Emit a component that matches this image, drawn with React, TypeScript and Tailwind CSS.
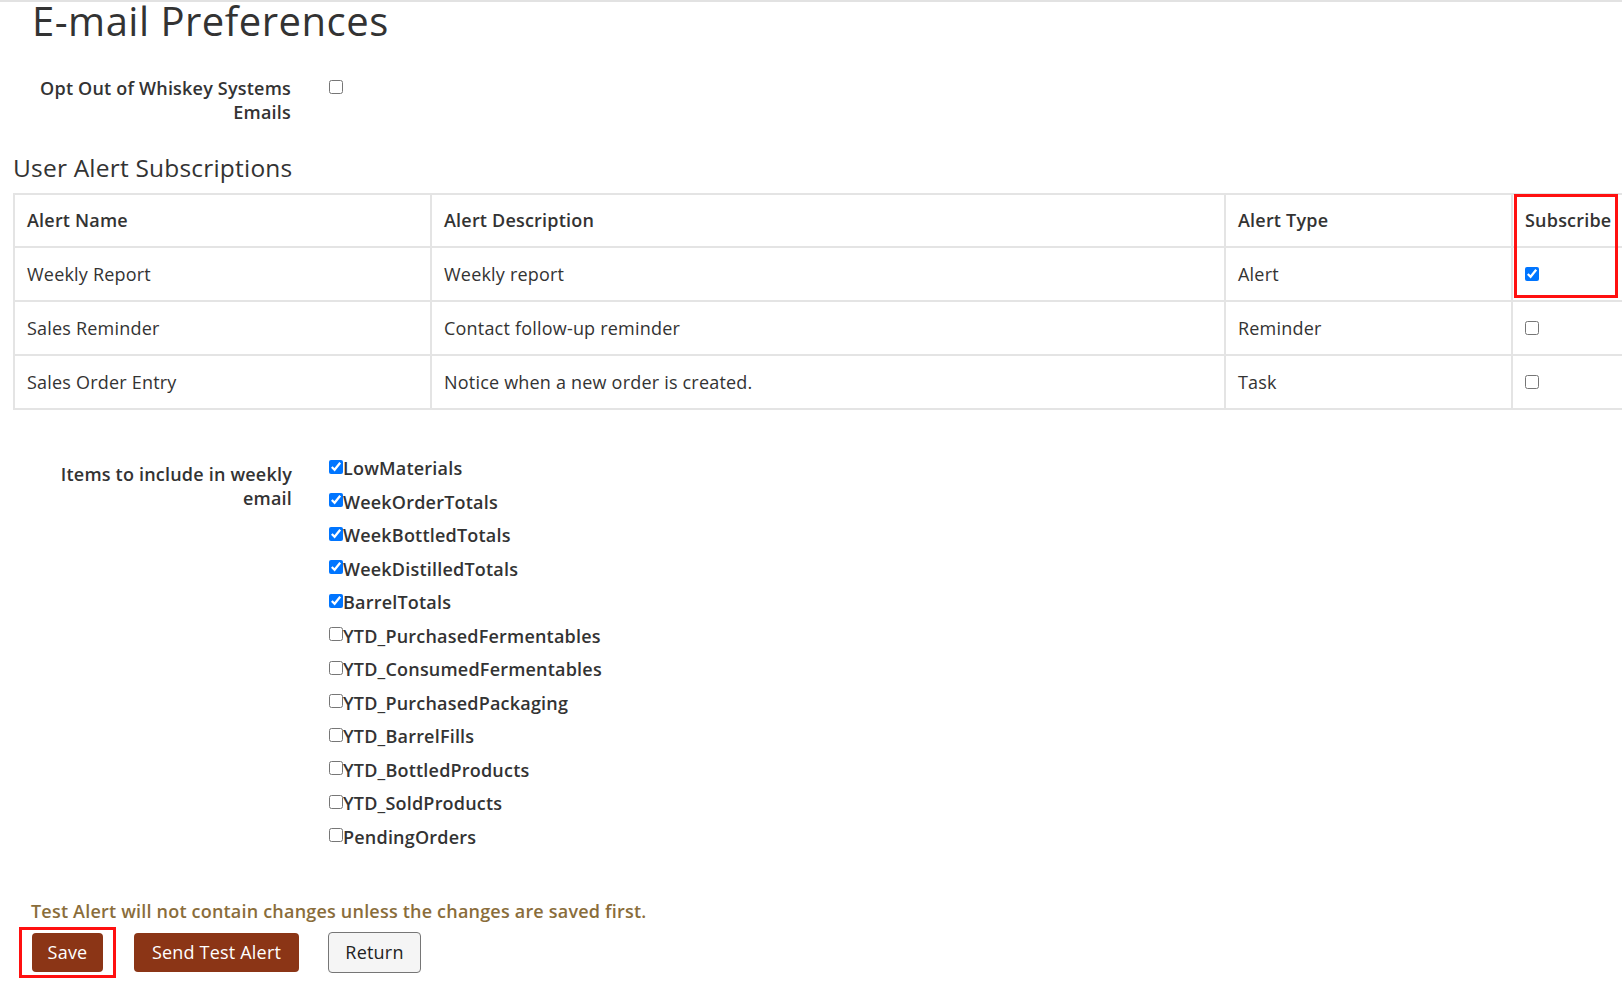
import React from "react"

const alerts = [
    { name: "Weekly Report", desc: "Weekly report", type: "Alert", on: true },
    { name: "Sales Reminder", desc: "Contact follow-up reminder", type: "Reminder", on: false },
    { name: "Sales Order Entry", desc: "Notice when a new order is created.", type: "Task", on: false },
]

const items = [
    { key: "LowMaterials", on: true },
    { key: "WeekOrderTotals", on: true },
    { key: "WeekBottledTotals", on: true },
    { key: "WeekDistilledTotals", on: true },
    { key: "BarrelTotals", on: true },
    { key: "YTD_PurchasedFermentables", on: false },
    { key: "YTD_ConsumedFermentables", on: false },
    { key: "YTD_PurchasedPackaging", on: false },
    { key: "YTD_BarrelFills", on: false },
    { key: "YTD_BottledProducts", on: false },
    { key: "YTD_SoldProducts", on: false },
    { key: "PendingOrders", on: false },
]

function Box({ checked }: { checked: boolean }) {
    return (
        <input
            type="checkbox"
            defaultChecked={checked}
            className="m-0 block h-[14px] w-[14px] accent-[#0075ff]"
        />
    )
}

export default function App() {
    return (
        <div className="min-h-screen w-full overflow-hidden border-t-2 border-[#e2e2e2] bg-white text-[#333] tracking-[0.2px] [font-family:'Open_Sans',sans-serif]">
            <h1 className="pl-[32px] text-[40px] leading-[38px] tracking-[0.5px] text-[#333]">E-mail Preferences</h1>

            <div className="mt-[36px] flex">
                <label className="w-[291px] pl-[21px] text-right text-[18px] leading-[24px] font-semibold">
                    Opt Out of Whiskey Systems Emails
                </label>
                <div className="ml-[38px] pt-[4px]">
                    <Box checked={false} />
                </div>
            </div>

            <h2 className="mt-[30px] pl-[13px] text-[24.5px] leading-[28px] text-[#333]">User Alert Subscriptions</h2>

            <div className="relative ml-[13px] mt-[11px]">
                <table className="w-[1640px] table-fixed border-collapse text-[18px]">
                    <colgroup>
                        <col className="w-[417px]" />
                        <col className="w-[794px]" />
                        <col className="w-[287px]" />
                        <col />
                    </colgroup>
                    <thead>
                        <tr className="h-[53px]">
                            {["Alert Name", "Alert Description", "Alert Type", "Subscribe"].map((h) => (
                                <th key={h} className="border-2 border-[#e4e4e4] px-[12px] text-left font-semibold">
                                    {h}
                                </th>
                            ))}
                        </tr>
                    </thead>
                    <tbody>
                        {alerts.map((a) => (
                            <tr key={a.name} className="h-[54px]">
                                <td className="border-2 border-[#e4e4e4] px-[12px]">{a.name}</td>
                                <td className="border-2 border-[#e4e4e4] px-[12px]">{a.desc}</td>
                                <td className="border-2 border-[#e4e4e4] px-[12px]">{a.type}</td>
                                <td className="border-2 border-[#e4e4e4] px-[12px]">
                                    <Box checked={a.on} />
                                </td>
                            </tr>
                        ))}
                    </tbody>
                </table>
                {/* highlight around the subscribe column */}
                <div className="pointer-events-none absolute left-[1501px] top-[1px] h-[104px] w-[104px] border-[3px] border-[#ff1010]" />
            </div>

            <div className="mt-[42px] flex">
                <label className="w-[292px] pl-[22px] pt-[10px] text-right text-[18px] leading-[24px] font-semibold">
                    Items to include in weekly email
                </label>
                <div className="ml-[37px] flex flex-col">
                    {items.map((it) => (
                        <label key={it.key} className="flex h-[33.5px] items-center text-[18px] font-semibold">
                            <span className="-mt-[4px] flex">
                                <Box checked={it.on} />
                            </span>
                            {it.key}
                        </label>
                    ))}
                </div>
            </div>

            <p className="mt-[44px] pl-[31px] text-[18px] font-semibold text-[#8a6d3b]">
                Test Alert will not contain changes unless the changes are saved first.
            </p>

            <div className="mt-[7px] flex items-center pl-[32px]">
                <div className="relative">
                    <button className="h-[39px] w-[71px] rounded-[4px] bg-[#8b3516] text-[18px] font-medium text-white">Save</button>
                    <div className="pointer-events-none absolute -left-[13px] -top-[6px] h-[51px] w-[97px] border-[3px] border-[#ff1010]" />
                </div>
                <button className="ml-[31px] h-[39px] w-[165px] rounded-[4px] bg-[#8b3516] text-[18px] font-medium text-white">
                    Send Test Alert
                </button>
                <button className="ml-[29px] h-[41px] w-[93px] rounded-[4px] border border-[#767676] bg-[#f5f5f5] text-[18px] font-medium text-[#222]">
                    Return
                </button>
            </div>
        </div>
    )
}
